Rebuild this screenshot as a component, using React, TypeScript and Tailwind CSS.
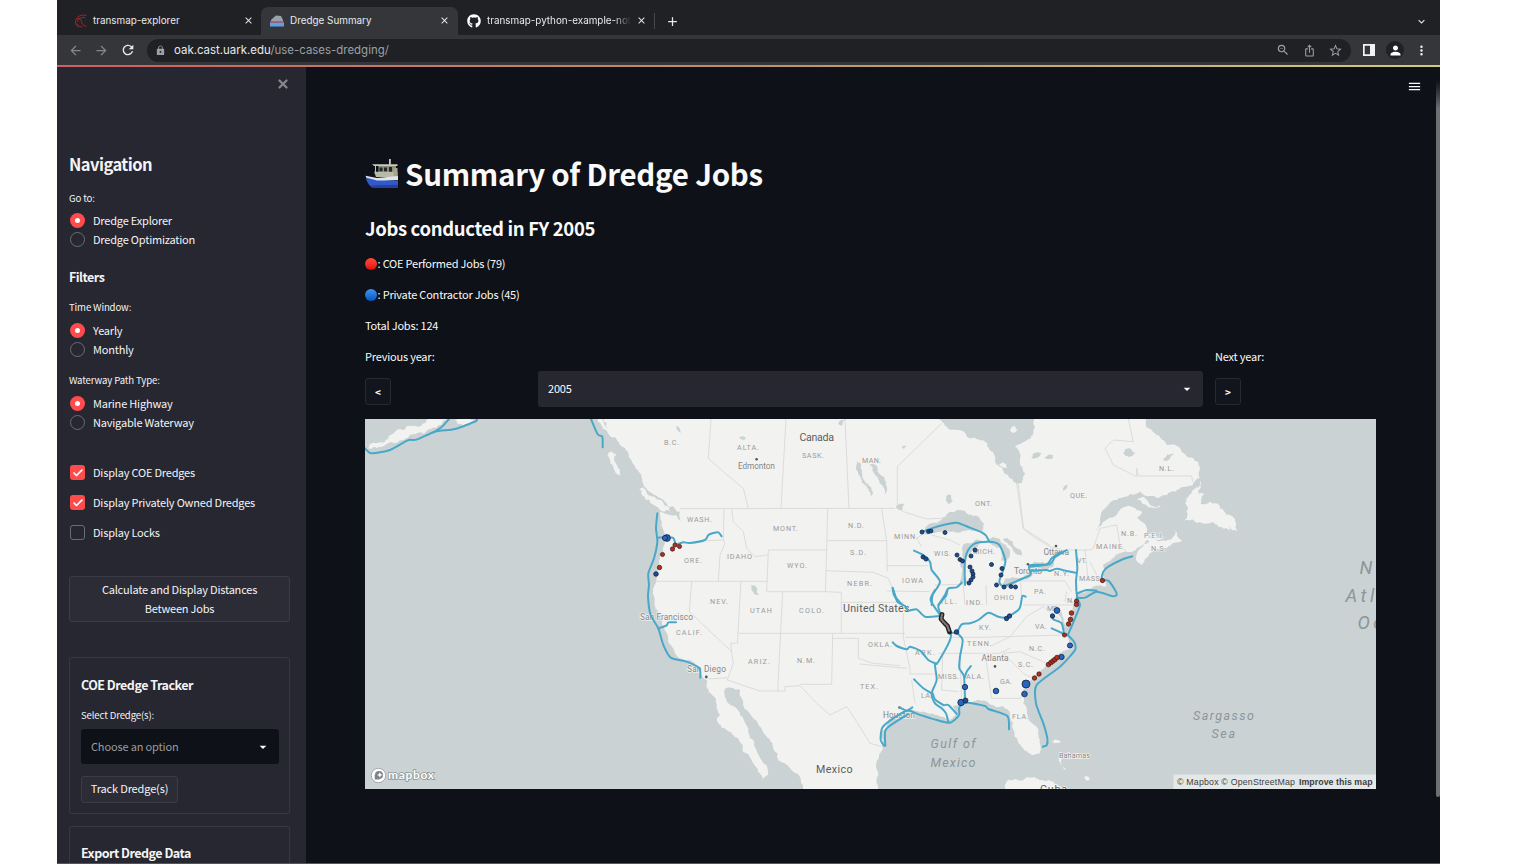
import type { ReactNode } from "react";
import { FaGithub } from "react-icons/fa";
import { Check as CheckMark, X } from "lucide-react";
import {
  MdAdd, MdArrowBack, MdArrowForward, MdArrowDropDown, MdClose, MdExpandMore, MdIosShare,
  MdLock, MdMenu, MdMoreVert, MdPerson, MdRefresh, MdStarBorder, MdZoomOut,
} from "react-icons/md";

type P = [number, number];

const parse = (src: string): P[] => src.split(" ").map((s) => s.split(",").map(Number) as P);

/** Turns a coarse outline into a slightly ragged coastline. */
function coast(src: string, amp = 0.17): string {
  let seed = 7;
  const rnd = () => {
    seed = (seed * 16807) % 2147483647;
    return seed / 2147483647 - 0.5;
  };
  let cur = parse(src);
  for (let k = 0; k < 3; k++) {
    const next: P[] = [];
    cur.forEach((p, i) => {
      const q = cur[(i + 1) % cur.length];
      const dx = q[0] - p[0];
      const dy = q[1] - p[1];
      const len = Math.hypot(dx, dy);
      next.push(p);
      if (len > 2 && len < 60) {
        const r = rnd() * amp * 2;
        next.push([(p[0] + q[0]) / 2 - dy * r, (p[1] + q[1]) / 2 + dx * r]);
      }
    });
    cur = next;
  }
  return "M" + cur.map((p) => p[0].toFixed(1) + " " + p[1].toFixed(1)).join("L") + "Z";
}

/** A smooth curve through every point of the list. */
function curve(src: string): string {
  const p = parse(src);
  let d = `M${p[0][0]} ${p[0][1]}`;
  for (let i = 0; i < p.length - 1; i++) {
    const a = p[i - 1] ?? p[i];
    const b = p[i];
    const c = p[i + 1];
    const e = p[i + 2] ?? c;
    const k = 8;
    d += `C${b[0] + (c[0] - a[0]) / k} ${b[1] + (c[1] - a[1]) / k} ${c[0] - (e[0] - b[0]) / k} ${c[1] - (e[1] - b[1]) / k} ${c[0]} ${c[1]}`;
  }
  return d;
}

const mainland =
  "603,419 607,428 612,435 620,445 628,452 632,462 638,470 642,478 645,487 652,493 665,502 671,508 680,512 681,521 676,515 660,512 662,522 664,532 663,548 659,565 656,582 654,597 658,612 662,623 668,638 673,648 678,657 695,663 702,675 707,680 712,695 720,715 717,718 722,728 733,735 743,752 757,768 763,779 768,775 760,758 750,738 740,715 728,703 726,688 740,690 743,705 753,718 763,732 773,748 790,768 803,789 878,789 877,770 883,747 881,733 888,722 907,710 917,711 927,713 937,715 950,720 957,714 953,706 967,703 977,700 993,705 1003,706 1010,712 1013,723 1015,737 1023,748 1032,755 1040,753 1040,740 1032,723 1023,703 1023,690 1033,678 1047,663 1060,653 1073,648 1068,638 1063,630 1058,615 1062,612 1068,627 1073,613 1073,607 1077,600 1077,592 1092,588 1100,585 1108,587 1105,580 1103,565 1113,558 1127,552 1137,548 1147,540 1155,540 1137,553 1136,560 1142,565 1148,557 1167,548 1182,540 1175,530 1172,539 1166,541 1150,538 1142,522 1137,518 1142,512 1133,507 1120,510 1103,522 1095,530 1100,520 1117,500 1130,494 1150,496 1167,495 1183,487 1200,478 1200,468 1193,458 1180,448 1167,445 1157,435 1147,428 1146,419 1034,419 1033,435 1026,441 1015,447 1020,458 1025,473 1022,483 1017,484 1008,475 1002,468 995,460 993,452 987,443 970,438 957,430 942,422 938,419";

const islands = [
  "1200,480 1192,491 1188,508 1184,521 1200,522 1213,522 1221,527 1230,531 1228,525 1237,532 1235,518 1227,515 1220,508 1210,502 1201,504 1204,493 1199,494",
  "639,488 646,490 655,497 664,505 672,513 660,510 650,502 642,495",
  "608,453 616,454 617,465 621,476 615,471 610,463",
  "367,449 376,443 390,435 402,430 415,426 428,419 447,419 435,428 424,434 408,438 394,443 380,447",
  "455,420 470,419 476,419 468,424 458,424",
  "598,419 604,421 612,430 617,437 610,436 603,429",
  "1137,499 1147,500 1161,506 1155,508 1143,504",
  "1148,534 1157,537 1164,536 1160,540 1151,538",
  "1005,785 1015,779 1027,777 1042,780 1055,784 1070,789 1005,789",
  "1052,742 1058,740 1063,741 1057,743",
  "1059,757 1062,758 1066,770 1061,765",
  "1084,777 1091,779 1088,781",
  "1010,430 1015,426 1018,430 1013,433",
  "999,464 1006,464 1008,468 1002,467",
];

const lakes = [
  "924,535 931,523 943,518 952,512 965,511 977,516 984,524 982,532 972,531 960,533 948,531 938,532",
  "962,548 966,543 975,540 982,541 972,550 966,560 967,583 960,583 960,565",
  "986,540 1000,539 1006,545 1010,553 1006,562 1001,560 1002,549 992,545",
  "1003,539 1012,541 1021,550 1022,556 1014,552 1009,545",
  "1002,584 1012,577 1025,575 1034,571 1028,579 1014,585 1006,588",
  "1030,566 1042,562 1054,561 1053,567 1040,570 1031,570",
  "870,464 877,466 884,477 887,488 885,494 882,485 876,476",
  "856,460 862,470 868,484 873,492 871,496 864,484 858,474",
  "946,496 951,495 953,501 948,504",
  "751,585 757,588 759,595 754,594",
  "1123,453 1130,448 1136,453 1129,457",
  "1031,458 1038,452 1042,453 1037,458",
  "1045,457 1053,455 1053,458 1046,459",
  "1163,459 1174,454 1170,459 1165,461",
  "1063,491 1069,483 1067,488",
  "676,426 680,429 682,433 678,431",
  "739,438 748,438 744,440",
  "896,506 904,504 903,510 897,509",
  "902,447 907,446 904,449",
  "838,424 846,419 842,426",
  "669,506 676,510 680,519 675,513",
];

function Region({ x, y, children }: { x: number; y: number; children: ReactNode }) {
  return <g transform={`translate(${x} ${y}) scale(0.33333)`}>{children}</g>;
}
function Lines({ list }: { list: string[] }) {
  return <>{list.map((p) => <polyline key={p} points={p} vectorEffect="non-scaling-stroke" />)}</>;
}
function Curves({ list }: { list: string[] }) {
  return <>{list.map((p) => <path key={p} d={curve(p)} vectorEffect="non-scaling-stroke" />)}</>;
}

const bordersWest = [
  "213,12 205,130 250,170 310,220 325,280", "120,281 765,280", "438,12 423,280", "615,12 627,280",
  "252,281 250,375 255,385 240,420 235,498", "180,378 250,375", "48,499 382,499",
  "275,281 280,320 310,350 320,400 345,425 383,420", "385,405 560,405 556,530 380,530 385,405",
  "563,281 560,405", "562,377 740,377", "558,467 700,472 745,490 765,540 775,562",
  "725,281 740,377 742,470", "604,562 790,562", "556,530 604,532 604,655",
  "155,499 148,590 275,710 272,685 292,685 303,499", "295,655 795,655", "428,532 413,828",
  "275,710 280,745 262,795 360,828 435,828 435,815 480,812 530,865 570,900 620,875 650,920 690,985 740,998",
  "578,655 575,808 480,808", "578,670 655,670 655,730 700,745 780,752", "205,792 262,788",
];
const bordersNorth = [
  "245,25 112,155 112,280 130,290 200,312 240,310 290,300", "470,205 490,340 545,375 570,390",
  "80,452 205,452", "205,345 170,370 185,395", "215,360 270,375 300,390", "225,510 310,508",
  "310,510 315,570", "378,510 380,570", "80,528 210,530", "482,500 484,545",
];
const bordersSouth = [
  "135,142 360,142 610,135", "130,70 130,142 150,235 150,252 230,252", "235,190 420,190 450,175",
  "300,190 305,330", "248,190 245,300 295,305", "375,190 395,325 480,325 490,310", "430,190 490,250 520,265",
  "390,170 450,140 500,80 550,50 600,90", "155,270 165,340", "490,45 640,45", "430,190 480,185 560,220", "0,222 60,228 140,235",
];
const bordersEast = [
  "385,12 400,80 340,75 315,100 340,150 410,185 410,160 415,183 575,183 578,200",
  "55,205 70,340 100,365 150,395 190,405 270,405", "270,405 280,400 300,340 350,330 360,390 380,410",
  "255,405 260,450 265,500", "270,440 290,480", "65,498 195,498 215,530", "200,530 195,560",
];

const waterWest = [
  "52,295 48,340 52,380 42,430 25,475 27,510 24,545 32,600 55,640 70,690 92,728 140,740 178,760 181,788",
  "55,640 80,631 85,622 108,622",
  "52,368 98,368 108,388 130,382 150,384 195,375 205,360 220,354 235,352 245,364",
  "758,518 762,540 780,565",
];
const waterNorth = [
  "188,350 215,340 250,330 290,323 330,338 365,352 378,362 388,380",
  "315,510 314,450 322,410 345,385 388,380 415,387 428,410 436,440 428,470 418,500 432,513 490,490 512,478 508,452 560,448 575,430 600,412",
  "162,407 190,420 210,440 215,465 240,500 218,540 215,570",
  "305,503 290,517 265,520 255,540 235,570",
  "98,520 108,548 128,570",
];
const waterSouth = [
  "100,0 112,35 135,48 145,62 170,58 195,80 240,78", "225,0 212,30 240,75", "262,0 258,18 235,48 245,80",
  "240,78 272,128 268,155 235,215 225,225 230,270 215,310 225,340 245,355 258,370 265,395",
  "218,310 225,328 250,345 265,345 290,372",
  "272,128 290,127 305,103 330,100 355,90 385,68 415,80 440,82 475,60 482,45 487,18 497,20",
  "290,127 308,150 300,200 298,235 312,260 315,335", "314,262 320,245 333,228",
  "98,157 110,168 140,178 150,170 180,182 205,210 230,222", "162,268 190,295 215,310",
  "72,467 62,450 66,415 90,392 140,362 175,373 230,390 270,398 297,376 298,352 320,338 375,348 385,357 442,378 447,418",
  "76,467 76,422 100,400 145,372", "118,352 140,362 157,352",
  "548,470 560,466 562,445 550,400 528,340 530,285 600,230 645,180 642,155 620,132",
  "575,75 580,88 605,100 612,132", "575,115 612,132",
];
const waterEast = [
  "230,548 255,548 290,530 335,543 350,540 345,525 325,497 305,495 310,470 325,455 370,432 397,424",
  "230,536 260,525 290,527", "228,405 232,460 228,500 232,550 240,570 225,610 205,657",
  "90,468 140,465 150,468 170,461 200,468 228,473", "90,455 150,447 165,427 200,405",
];
const waterAlaska = [
  "0,100 20,115 75,105 128,76 155,74 210,50 270,42 333,18 333,10", "205,52 230,36 252,12",
  "677,10 698,58 712,65 713,97",
];

// x, y, radius
const blueDots: number[][] = [
  [667, 538, 3.4], [665, 538, 2.6], [656, 574, 2.3], [922, 532, 2], [928.5, 531.5, 2], [931, 531, 2], [945, 532.5, 2],
  [923, 557, 2], [926, 559, 2.1], [957, 555, 2], [960, 559.5, 2], [962.5, 561, 2], [971, 556, 2], [975, 550, 2],
  [970, 567, 2], [972, 571, 2], [973, 574, 2], [973, 577, 2], [971, 580, 2], [969, 583, 2],
  [991.5, 564.5, 2], [1002, 568.5, 2], [1001, 575, 2], [996.5, 585, 2], [1004, 587, 2], [1011, 586.5, 2], [1015.5, 587, 2],
  [1006.5, 618.5, 2.2], [1009.5, 616, 2.2], [956.5, 632, 2.3], [1052.5, 616, 2.2], [1057, 610.5, 2.9],
  [1070, 645.5, 2.6], [1061.5, 657, 2.7], [1026, 684, 4], [1024.5, 694, 2.8], [996, 691, 2.8], [965, 687, 2.7],
  [961, 702.5, 3.2], [965.5, 700.5, 2.5],
];
const redDots: number[][] = [
  [675, 545, 2.1], [679.5, 546.5, 2.1], [672.5, 549, 2.2], [662.5, 554.5, 2.1], [659.5, 567.5, 2.2],
  [1102.5, 580.5, 2.2], [1076.5, 601, 2.1], [1076.5, 604.5, 2.2], [1071.5, 613, 2.3], [1070.5, 619.5, 2.3],
  [1068.5, 624, 2.2], [1064.5, 635, 2.1], [1048.5, 664.5, 2.3], [1051, 662.5, 2.3], [1053, 661, 2.3],
  [1055, 659.5, 2.3], [1057, 657.5, 2.3], [1039, 674, 2.2], [1034.5, 678, 2.2],
];

type Label = [string, number, number, number];
// text, left, middle, width
const states: Label[] = [
  ["B.C.", 664, 442, 15], ["ALTA.", 737, 447.5, 22], ["SASK.", 802, 455, 22], ["MAN.", 862, 460, 19],
  ["WASH.", 687, 519, 25], ["ORE.", 684, 560.5, 18], ["MONT.", 773, 528.5, 25], ["IDAHO", 727, 556.5, 25],
  ["WYO.", 787, 565.5, 20], ["N.D.", 848, 525, 16], ["S.D.", 850, 552, 16], ["NEBR.", 847, 583, 25],
  ["NEV.", 710, 601.5, 18], ["UTAH", 750, 610, 22], ["COLO.", 799, 610, 25], ["CALIF.", 676, 632, 26],
  ["ARIZ.", 748, 661, 22], ["N.M.", 797, 660.5, 18], ["OKLA.", 868, 644, 24], ["TEX.", 860, 686.5, 18],
  ["ONT.", 975, 503.5, 17], ["MINN.", 894, 536, 24], ["WIS.", 934, 553, 17], ["MICH.", 973, 551, 22],
  ["IOWA", 902, 580.5, 21], ["ILL.", 941, 601, 16], ["IND.", 966, 602.5, 17], ["OHIO", 994, 597.5, 20],
  ["N.Y.", 1054, 573.5, 15], ["PA.", 1034, 591, 12], ["VT.", 1077, 560, 10], ["MAINE", 1096, 546, 26],
  ["MASS.", 1079, 578, 23], ["N.B.", 1121, 533.5, 16], ["P.E.I.", 1144, 535.5, 20], ["N.S.", 1151, 548, 15],
  ["QUE.", 1070, 495, 17], ["N.L.", 1159, 468, 15], ["N.J.", 1067, 600.5, 12], ["MD.", 1047, 608.5, 12],
  ["VA.", 1035, 626, 12], ["KY.", 979, 627.5, 12], ["TENN.", 967, 643, 25], ["N.C.", 1029, 648, 16],
  ["S.C.", 1018, 664.5, 15], ["GA.", 1000, 681, 12], ["ALA.", 966, 676, 18], ["MISS.", 938, 676, 21],
  ["ARK.", 915, 652.5, 20], ["LA.", 921, 695.5, 11], ["FLA.", 1012, 716, 17],
];
const cities: Label[] = [
  ["Edmonton", 738, 466, 37], ["San Francisco", 640, 617.5, 53], ["San Diego", 687, 669.5, 39],
  ["Houston", 883, 715, 32], ["Ottawa", 1043.5, 552.5, 25.5], ["Toronto", 1014, 571, 28],
  ["Atlanta", 981.5, 658.5, 27],
];
const countries: Label[] = [
  ["Canada", 799.5, 437, 34.5], ["United States", 843, 608.5, 66.5], ["Mexico", 816, 769, 36.5], ["Cuba", 1040, 789, 27],
];

function Labels({ list, dy }: { list: Label[]; dy: number }) {
  return (
    <>
      {list.map(([t, x, y, w]) => (
        <text key={t} x={x} y={y + dy} textLength={w}>{t}</text>
      ))}
    </>
  );
}

function JobMap() {
  return (
    <svg className="block h-[370px] w-[1011px] shrink-0 bg-[#cad2d3]" viewBox="365 419 1011 370" fontFamily="Roboto, sans-serif">
      <g fill="#f2f2f1">
        <path d={coast(mainland)} />
        {islands.map((s) => <path key={s} d={coast(s, 0.25)} />)}
      </g>
      <g fill="#cad2d3">{lakes.map((s) => <path key={s} d={coast(s, 0.2)} />)}</g>
      <g fill="none" stroke="#d6d6d6" strokeWidth="0.8" strokeLinejoin="round">
        <Region x={640} y={415}><Lines list={bordersWest} /></Region>
        <Region x={860} y={415}><Lines list={bordersNorth} /></Region>
        <Region x={860} y={590}><Lines list={bordersSouth} /></Region>
        <Region x={1000} y={415}><Lines list={bordersEast} /></Region>
      </g>
      <g fill="#9a9a9a" fontSize="7.2" stroke="#f2f2f1" strokeWidth="1.2" paintOrder="stroke"><Labels list={states} dy={2.6} /></g>
      <g fill="#858585" fontSize="8.4" stroke="#f2f2f1" strokeWidth="1.4" paintOrder="stroke">
        <Labels list={cities} dy={2.9} />
        <text x="1059" y="757.7" fontSize="7.4" textLength="31">Bahamas</text>
      </g>
      <g fill="#5c5c5c" fontSize="10.7" stroke="#f2f2f1" strokeWidth="1.4" paintOrder="stroke"><Labels list={countries} dy={3.6} /></g>
      <g fill="#8b9799" fontStyle="italic" fontSize="12.5">
        <text x="930.5" y="748.3" textLength="45">Gulf of</text>
        <text x="930.5" y="766.5" textLength="45">Mexico</text>
        <text x="1193" y="719.5" textLength="61">Sargasso</text>
        <text x="1211.500" y="737.5" textLength="23.5">Sea</text>
        <g fontSize="18.5">
          <text x="1359.5" y="574.2">N</text>
          <text x="1345.5" y="601.5" letterSpacing="3.5">Atlantic</text>
          <text x="1357.5" y="629" letterSpacing="3.5">Ocean</text>
        </g>
      </g>
      <g fill="#555">
        <circle cx="756.6" cy="459.3" r="1.3" /><circle cx="706.3" cy="677" r="1.4" /><circle cx="995" cy="666.4" r="1.3" />
        <circle cx="1056" cy="546" r="1.3" /><circle cx="1028" cy="564.3" r="1.3" /><circle cx="899.5" cy="707.5" r="1.3" />
      </g>
      <g fill="none" stroke="#49a8c8" strokeWidth="2" strokeLinejoin="round" strokeLinecap="round">
        <Region x={640} y={415}><Curves list={waterWest} /></Region>
        <Region x={860} y={415}><Curves list={waterNorth} /></Region>
        <Region x={860} y={590}><Curves list={waterSouth} /></Region>
        <Region x={1000} y={415}><Curves list={waterEast} /></Region>
        <Region x={365} y={415}><Curves list={waterAlaska} /></Region>
      </g>
      <g fill="none" strokeLinecap="round" strokeLinejoin="round">
        <polyline points="942,614.5 941,619 944.5,623 947.5,626 949.5,632" stroke="#222" strokeWidth="4.8" />
        <polyline points="942,614.5 941,619 944.5,623 947.5,626 949.5,632" stroke="#8b7775" strokeWidth="2.2" strokeDasharray="1 1.6" />
      </g>
      <g stroke="#12233f" strokeWidth="0.8">
        {blueDots.map(([x, y, r]) => <circle key={`${x}-${y}`} cx={x} cy={y} r={r} fill={r > 2.5 ? "#2766c0" : "#1d4d92"} />)}
      </g>
      <g stroke="#3c1512" strokeWidth="0.7" fill="#b2301f">
        {redDots.map(([x, y, r]) => <circle key={`${x}-${y}`} cx={x} cy={y} r={r} />)}
      </g>
      <g>
        <circle cx="378.5" cy="775.5" r="7.2" fill="#fff" stroke="#90989a" strokeWidth="0.8" />
        <circle cx="379" cy="775" r="4" fill="#7d8486" />
        <path d="M374.700 779.600v-5l5 5z" fill="#7d8486" />
        <path d="M379.800 772.200l.9 1.800 1.800.9-1.800.9-.9 1.800-.9-1.800-1.800-.9 1.800-.9z" fill="#fff" />
        <text x="388" y="779.3" fontFamily="Lato, sans-serif" fontWeight="700" fontSize="12" textLength="46" fill="#fff" stroke="#8a9294" strokeWidth="1.5" paintOrder="stroke">mapbox</text>
      </g>
      <rect x="1173.5" y="774.5" width="203" height="14.5" fill="#e4e8e9" />
      <g fontFamily="Liberation Sans, Arial, sans-serif" fontSize="8.8" fill="#3c3f40">
        <text x="1177" y="785" textLength="118">© Mapbox © OpenStreetMap</text>
        <text x="1299" y="785" textLength="73.5" fontWeight="700">Improve this map</text>
      </g>
    </svg>
  );
}

function Ship() {
  return (
    <svg className="h-[30px] w-[34px] shrink-0" viewBox="0 0 34 30">
      <path d="M24 0h1.800v6H24z" fill="#c9cdb9" />
      <path d="M7 5.200h25.500v1.800H9z" fill="#c9ccb8" />
      <path d="M10 7h1v8h-1z" fill="#c3c6b2" />
      <path d="M13.500 7h17.500v10H13.500z" fill="#8b8f7e" />
      <path d="M14.500 8.500h3v4h-3zM19 8.500h3v4h-3zM24 8h3v6h-3z" fill="#23272a" />
      <path d="M9 12.800h23.500V18H11z" fill="#b9bba8" />
      <path d="M28.500 9h4v8h-4z" fill="#a9a48a" />
      <path d="M.5 16.800 12 19 33 17v4L12 22.500 2 20.200z" fill="#dfe4e8" />
      <path d="M.8 18.600 12 21.500h21v7.300H7.500Q2.500 26 .8 18.600z" fill="#3358cc" />
      <path d="M5.500 26.400 33 25.800v3H8z" fill="#263f9c" />
    </svg>
  );
}

function MiniShip() {
  return (
    <svg className="h-[13px] w-[14px] shrink-0" viewBox="0 0 14 13">
      <path d="M3 4l3-2.500 5 .5 2 4v2H1V6z" fill="#9ba1a8" />
      <path d="M0 7.300h14V9H0z" fill="#b14468" />
      <path d="M0 8.700h14V12.500H0z" fill="#5aa2e2" />
    </svg>
  );
}

function Swirl() {
  return (
    <svg className="h-[14px] w-[14px] shrink-0" viewBox="0 0 14 14" fill="none" stroke="#a3242b" strokeWidth="1">
      <path d="M12.500 1.500C7 0 1.500 3 1.500 8c0 2.500 1.500 4.500 3.500 5.300M11.500 4C8 2.800 4.500 4 3.500 8M3 5c3-1 4.500.5 4.500 2.500s1.500 4 5 5M3 9.500c1.500 2.500 3 3.500 5.500 3.500" />
    </svg>
  );
}

function Radio({ on, children }: { on?: boolean; children: ReactNode }) {
  return (
    <div className="flex h-[19px] items-center gap-2 pl-px">
      {on ? (
        <span className="flex size-[15px] items-center justify-center rounded-full bg-[#ff4b4b]"><span className="size-[5px] rounded-full bg-white" /></span>
      ) : (
        <span className="size-[15px] rounded-full border-[1.500px] border-[#6b6c75]" />
      )}
      <span className="pb-px text-[11px] tracking-[-0.2px]">{children}</span>
    </div>
  );
}

function Check({ on, children }: { on?: boolean; children: ReactNode }) {
  return (
    <div className="flex h-[19px] items-center gap-2 pl-px">
      {on ? (
        <span className="flex size-[15px] items-center justify-center rounded-[3px] bg-[#ff4b4b] text-white"><CheckMark size={12} strokeWidth={3.5} /></span>
      ) : (
        <span className="size-[15px] rounded-[3px] border-[1.500px] border-[#6b6c75]" />
      )}
      <span className="pb-px text-[11px] tracking-[-0.2px]">{children}</span>
    </div>
  );
}

const Small = ({ children }: { children: ReactNode }) => <div className="flex h-[14px] items-center text-[9.600px] tracking-[-0.13px]">{children}</div>;

const subhead = "flex h-5 shrink-0 items-center pb-[2px] text-[12.500px] font-bold tracking-[-0.5px]";

function Sidebar() {
  return (
    <aside className="flex w-[249px] shrink-0 flex-col overflow-hidden bg-[#262730] pr-4 pl-3 whitespace-nowrap text-[#f4f4f6]">
      <div className="flex h-[34px] shrink-0 items-center justify-end text-[#85868c]"><X size={14} strokeWidth={4} /></div>
      <h2 className="mt-[52px] flex h-6 shrink-0 items-center pb-[2px] text-[16.500px] font-bold tracking-[-0.55px]">Navigation</h2>
      <div className="mt-[14px]"><Small>Go to:</Small></div>
      <div className="mt-[6px] mb-px"><Radio on>Dredge Explorer</Radio><Radio>Dredge Optimization</Radio></div>
      <h3 className={`mt-[18px] ${subhead}`}>Filters</h3>
      <div className="mt-3"><Small>Time Window:</Small></div>
      <div className="mt-[7px]"><Radio on>Yearly</Radio><Radio>Monthly</Radio></div>
      <div className="mt-[14px]"><Small>Waterway Path Type:</Small></div>
      <div className="mt-[7px]"><Radio on>Marine Highway</Radio><Radio>Navigable Waterway</Radio></div>
      <div className="mt-[31px] flex flex-col gap-[11px]">
        <Check on>Display COE Dredges</Check>
        <Check on>Display Privately Owned Dredges</Check>
        <Check>Display Locks</Check>
      </div>
      <button className="mt-[34px] h-[46px] shrink-0 rounded-[3px] border border-[#3b3c45] bg-[#2b2c36] text-center text-[11px] leading-[19px] tracking-[-0.2px]">
        Calculate and Display Distances<br />Between Jobs
      </button>
      <section className="mt-[35px] flex h-[157px] shrink-0 flex-col rounded-[3px] border border-[#373841] pr-[10px] pl-[11px]">
        <h3 className={`mt-[18px] ${subhead}`}>COE Dredge Tracker</h3>
        <div className="mt-3"><Small>Select Dredge(s):</Small></div>
        <div className="mt-[7px] flex h-[35px] items-center justify-between rounded-[3px] bg-[#0e1117] pr-2 pl-[10px] text-[11px] text-[#9b9ca1]">
          <span className="pb-px tracking-[-0.15px]">Choose an option</span><MdArrowDropDown size={16} className="text-white" />
        </div>
        <button className="mt-3 h-[27px] w-[97px] rounded-[3px] border border-[#3b3c45] bg-[#2b2c36] pb-[2px] text-[11px] tracking-[-0.15px]">Track Dredge(s)</button>
      </section>
      <section className="mt-3 h-[60px] shrink-0 rounded-[3px] border border-[#373841] px-[11px]">
        <h3 className={`mt-[17px] ${subhead}`}>Export Dredge Data</h3>
      </section>
    </aside>
  );
}

const line = "flex h-[19px] items-center pb-[2px] text-[11px] tracking-[-0.2px]";

function Job({ red, children }: { red?: boolean; children: ReactNode }) {
  return (
    <div className={line}>
      <span className={red ? "mt-px size-3 rounded-full bg-linear-to-b from-[#ff4a3c] to-[#e00404]" : "mt-px size-3 rounded-full bg-linear-to-b from-[#3c93f5] to-[#0456bd]"} />
      <span className="ml-[0.500px]">: {children}</span>
    </div>
  );
}

function BrowserBar() {
  return (
    <header className="shrink-0 bg-[#202124] font-['Inter',sans-serif] text-[9.900px] whitespace-nowrap text-[#e8eaed]">
      <div className="flex h-[35px] items-end">
        <div className="flex h-7 w-[204px] items-center pr-[7px] pb-px pl-[17px]">
          <Swirl /><span className="ml-[5px] flex-1">transmap-explorer</span><MdClose size={11} />
        </div>
        <div className="flex h-7 w-[197px] items-center rounded-t-[7px] bg-[#35363a] pr-2 pb-px pl-[9px]">
          <MiniShip /><span className="ml-[6px] flex-1">Dredge Summary</span><MdClose size={11} />
        </div>
        <div className="flex h-7 w-[196px] items-center pr-[6px] pb-px pl-[9px]">
          <FaGithub size={14} className="shrink-0 text-white" />
          <span className="ml-[6px] w-[144px] shrink-0 mask-r-from-88% mask-r-to-100%">transmap-python-example-not</span>
          <MdClose size={11} className="ml-[5px] shrink-0" />
        </div>
        <div className="flex h-7 flex-1 items-center">
          <span className="h-4 w-px bg-[#46484c]" />
          <MdAdd size={15} className="ml-[10px]" />
          <MdExpandMore size={13} className="mr-3 ml-auto" />
        </div>
      </div>
      <div className="flex h-[30px] items-center bg-[#35363a] pr-[11px] pl-[11px]">
        <MdArrowBack size={15} className="text-[#85878b]" />
        <MdArrowForward size={15} className="ml-[11px] text-[#85878b]" />
        <MdRefresh size={16} className="ml-[11px]" />
        <div className="ml-[11px] flex h-[23px] w-[1204px] items-center rounded-full bg-[#202124] pr-2 pl-[8px] text-[#9aa0a6]">
          <MdLock size={11} />
          <span className="ml-[8px] flex-1 pt-px text-[11.450px]"><span className="text-[#e8eaed]">oak.cast.uark.edu</span>/use-cases-dredging/</span>
          <MdZoomOut size={14} /><MdIosShare size={13} className="ml-[13px]" /><MdStarBorder size={15} className="ml-[12px]" />
        </div>
        <svg className="ml-[12px] h-[12px] w-[12px]" viewBox="0 0 12 12"><path fill="#f1f3f4" fillRule="evenodd" d="M0 0h12v12H0zM1.700 1.700v8.600h5.300V1.700z" /></svg>
        <span className="ml-[11px] flex size-[18px] items-center justify-center rounded-full bg-[#202124] text-white"><MdPerson size={15} /></span>
        <MdMoreVert size={15} className="ml-auto" />
      </div>
      <div className="h-[2px] bg-linear-to-r from-[#cf5e60] via-[#bd9068] to-[#cfcd7c]" />
    </header>
  );
}

function Arrow({ label, sign }: { label: string; sign: string }) {
  return (
    <div className="flex flex-col">
      <div className={line}>{label}</div>
      <button className="mt-[11px] h-[27px] w-[26px] rounded-[3px] border border-[#272a33] bg-[#12151d] text-[10px] font-bold">{sign}</button>
    </div>
  );
}

export default function App() {
  return (
    <div className="h-[864px] w-[1536px] overflow-hidden bg-white">
      <div className="relative ml-[57px] flex h-[864px] w-[1383px] flex-col overflow-hidden border-b border-[#55565c] bg-[#0e1117] font-['Noto_Sans_CJK_SC',sans-serif]">
        <BrowserBar />
        <div className="flex min-h-0 flex-1">
          <Sidebar />
          <main className="flex min-w-0 flex-1 flex-col pl-[59px] whitespace-nowrap text-[#fafafa]">
            <div className="flex h-[38px] shrink-0 items-center justify-end pr-[18px]"><MdMenu size={15} /></div>
            <h1 className="mt-[49px] flex h-10 shrink-0 items-center gap-[6px] text-[29.500px] font-bold tracking-[-0.27px]"><Ship /><span className="pb-[2px]">Summary of Dredge Jobs</span></h1>
            <h2 className="mt-[20px] flex h-[30px] shrink-0 items-center text-[18.500px] font-bold tracking-[-0.33px]">Jobs conducted in FY 2005</h2>
            <div className="mt-[11px] flex shrink-0 flex-col gap-[12px]">
              <Job red>COE Performed Jobs (79)</Job>
              <Job>Private Contractor Jobs (45)</Job>
              <div className={line}>Total Jobs: 124</div>
            </div>
            <div className="mt-3 flex h-[71px] shrink-0">
              <div className="w-[173px]"><Arrow label="Previous year:" sign="<" /></div>
              <div className="mt-[23px] mr-3 flex h-[36px] w-[665px] items-center justify-between rounded-[3px] bg-[#262730] pr-2 pl-[10px] text-[11px]">
                <span className="pb-[2px] tracking-[-0.2px]">2005</span><MdArrowDropDown size={16} />
              </div>
              <Arrow label="Next year:" sign=">" />
            </div>
            <JobMap />
          </main>
        </div>
        <div className="absolute top-[80px] right-0 h-[717px] w-1 rounded-b-full bg-linear-to-b from-[#0e1117] via-[#6e6f73] via-4% to-[#6e6f73]" />
      </div>
    </div>
  );
}
